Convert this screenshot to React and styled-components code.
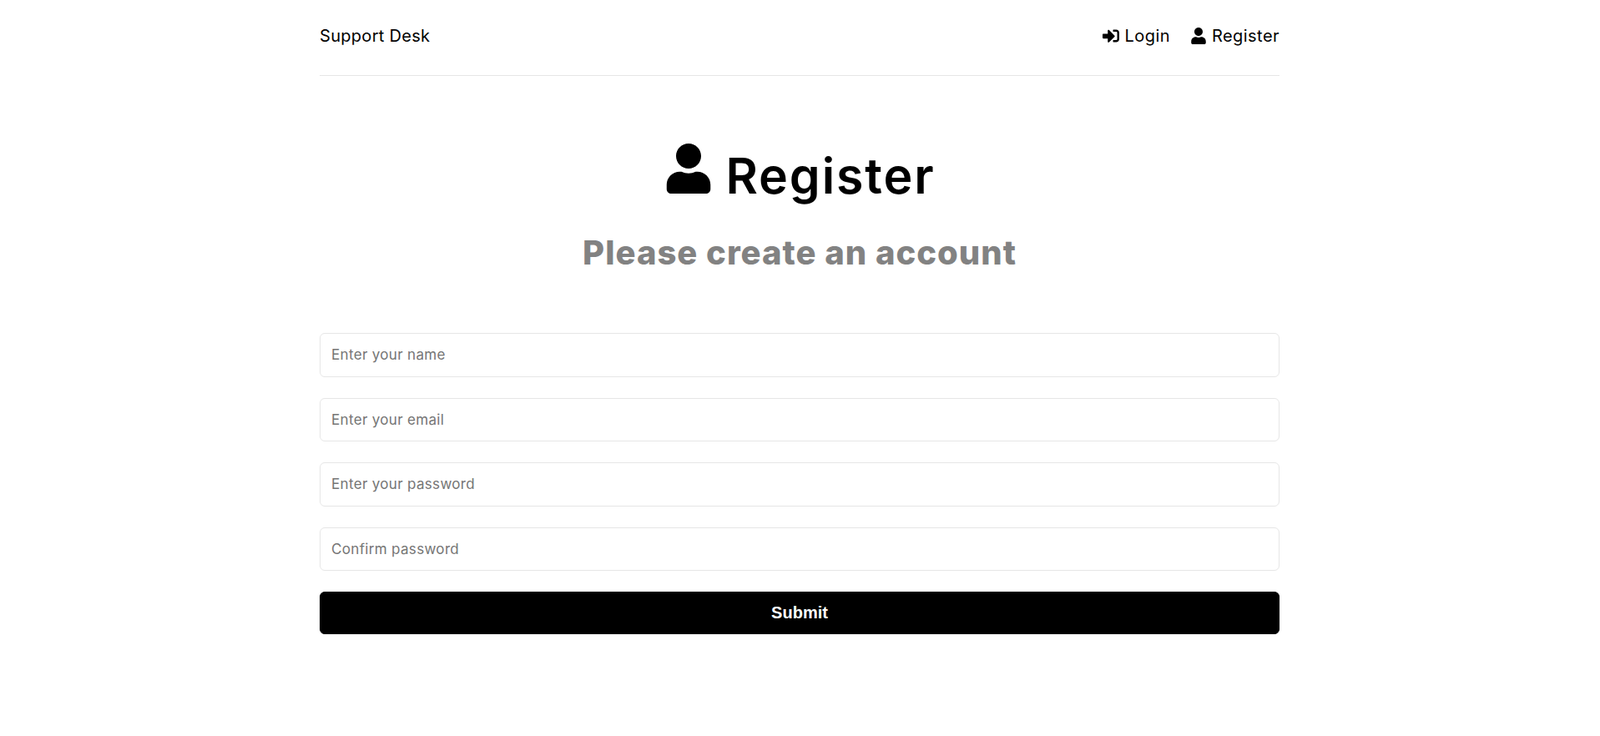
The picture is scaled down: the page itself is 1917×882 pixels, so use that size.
import React from "react";
import styled, { createGlobalStyle } from "styled-components";
import { FaSignInAlt, FaUser } from "react-icons/fa";

const GlobalStyle = createGlobalStyle`
  * {
    box-sizing: border-box;
    margin: 0;
    padding: 0;
  }
  body {
    font-family: "Inter", "Noto Sans", sans-serif;
    background: #fff;
    color: #000;
    height: 882px;
    padding-right: 1px;
    overflow: hidden;
  }
`;

const Container = styled.div`
  width: 1150px;
  margin: 0 auto;
  text-align: center;
`;

const Header = styled.header`
  display: flex;
  justify-content: space-between;
  align-items: center;
  height: 91px;
  padding-bottom: 4px;
  border-bottom: 1px solid #e6e6e6;
`;

const Logo = styled.div`
  font-size: 20px;
  letter-spacing: 0.3px;
`;

const Nav = styled.ul`
  display: flex;
  align-items: center;
  gap: 24px;
  list-style: none;
`;

const NavItem = styled.li`
  display: flex;
  align-items: center;
  gap: 6px;
  font-size: 20px;
  letter-spacing: 0.45px;
`;

const Heading = styled.section`
  padding: 75px 20px 0;
  margin-bottom: 66px;
`;

const Title = styled.h1`
  font-size: 59px;
  font-weight: 600;
  line-height: 90px;
  letter-spacing: 1.9px;
  svg {
    margin-right: 14px;
  }
`;

const Subtitle = styled.p`
  color: #828282;
  font-size: 40px;
  font-weight: 800;
  line-height: 60px;
  letter-spacing: 1px;
  padding-top: 17px;
`;

const Form = styled.form`
  display: flex;
  flex-direction: column;
`;

const Input = styled.input`
  display: block;
  width: 100%;
  height: 52.5px;
  padding: 0 13px;
  margin-bottom: 25px;
  border: 1px solid #e6e6e6;
  border-radius: 6px;
  font-family: inherit;
  font-size: 17px;
  letter-spacing: 0.33px;
  background: #fff;
  &::placeholder {
    color: #757575;
  }
`;

const SubmitButton = styled.button`
  width: 100%;
  height: 51px;
  border: 1px solid #000;
  border-radius: 6px;
  background: #000;
  color: #fff;
  font-family: "Liberation Sans", Arial, sans-serif;
  font-size: 20px;
  font-weight: 700;
`;

const placeholders = [
  "Enter your name",
  "Enter your email",
  "Enter your password",
  "Confirm password",
];

export default function App() {
  return (
    <Container>
      <GlobalStyle />
      <Header>
        <Logo>Support Desk</Logo>
        <Nav>
          <NavItem>
            <FaSignInAlt size={20} /> Login
          </NavItem>
          <NavItem>
            <FaUser size={20} /> Register
          </NavItem>
        </Nav>
      </Header>
      <Heading>
        <Title>
          <FaUser size={60} />
          Register
        </Title>
        <Subtitle>Please create an account</Subtitle>
      </Heading>
      <Form>
        {placeholders.map((text) => (
          <Input key={text} type="text" placeholder={text} />
        ))}
        <SubmitButton type="button">Submit</SubmitButton>
      </Form>
    </Container>
  );
}
